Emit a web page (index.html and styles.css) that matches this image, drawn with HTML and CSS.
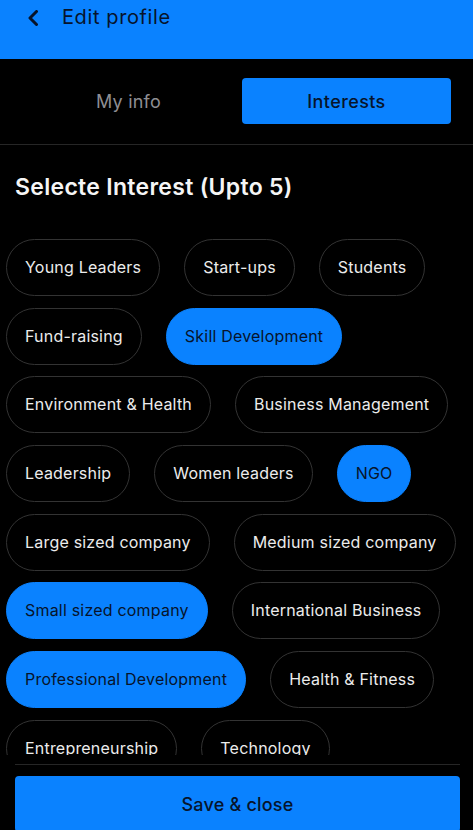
FILE: index.html
```html
<!DOCTYPE html>
<html lang="en">
<head>
    <meta charset="UTF-8">
    <meta name="viewport" content="width=device-width, initial-scale=1.0">
    <title>Edit profile</title>
    <link rel="stylesheet" href="styles.css">
</head>
<body>
    <div class="app">
        <header class="topbar">
            <button class="back-btn" aria-label="Back">
                <svg width="12" height="16" viewBox="0 0 12 16">
                    <polyline points="9.5,1.5 3,8 9.5,14.5" fill="none" stroke="#07142b" stroke-width="3" stroke-linecap="round" stroke-linejoin="round"/>
                </svg>
            </button>
            <h1>Edit profile</h1>
        </header>

        <div class="tabs">
            <button class="tab">My info</button>
            <button class="tab active">Interests</button>
        </div>

        <h2 class="section-title">Selecte Interest (Upto 5)</h2>

        <div class="chip-list">
            <span class="chip">Young Leaders</span>
            <span class="chip">Start-ups</span>
            <span class="chip">Students</span>
            <span class="chip">Fund-raising</span>
            <span class="chip selected">Skill Development</span>
            <span class="chip">Environment &amp; Health</span>
            <span class="chip">Business Management</span>
            <span class="chip">Leadership</span>
            <span class="chip">Women leaders</span>
            <span class="chip selected">NGO</span>
            <span class="chip">Large sized company</span>
            <span class="chip">Medium sized company</span>
            <span class="chip selected">Small sized company</span>
            <span class="chip">International Business</span>
            <span class="chip selected">Professional Development</span>
            <span class="chip">Health &amp; Fitness</span>
            <span class="chip">Entrepreneurship</span>
            <span class="chip">Technology</span>
        </div>

        <div class="footer">
            <button class="save-btn">Save &amp; close</button>
        </div>
    </div>
</body>
</html>
```

FILE: styles.css
```css
body {
    margin: 0;
    background-color: #000;
    font-family: Inter, "Noto Sans", sans-serif;
    color: #f2f2f2;
    overflow: hidden;
}

/* a little taller than the window: the save button runs past the bottom edge */
.app {
    height: 832px;
    display: flex;
    flex-direction: column;
}

.topbar {
    height: 59px;
    box-sizing: border-box;
    background-color: #0a82ff;
    display: flex;
    align-items: flex-start;
    padding: 5px 0 0 27px;
    flex-shrink: 0;
}

.back-btn {
    background: none;
    border: none;
    padding: 0;
    margin-top: 5px;
    width: 12px;
    height: 16px;
    display: flex;
}

.topbar h1 {
    margin: 0 0 0 23px;
    font-size: 20px;
    line-height: 24px;
    font-weight: 400;
    letter-spacing: 0.6px;
    color: #07142b;
}

.tabs {
    display: flex;
    gap: 9px;
    padding: 19px 22px 20px 24px;
    border-bottom: 1px solid #262626;
    flex-shrink: 0;
}

.tab {
    flex: 1;
    height: 46px;
    background: none;
    border: none;
    border-radius: 4px;
    font-family: inherit;
    font-size: 18px;
    letter-spacing: 0.2px;
    color: #8e8e93;
}

.tab.active {
    background-color: #0a82ff;
    color: #07142b;
    font-weight: 500;
    letter-spacing: 0.4px;
}

.section-title {
    margin: 0;
    padding: 28px 15px 0;
    font-size: 23px;
    line-height: 28px;
    font-weight: 600;
    letter-spacing: 0.3px;
    color: #f5f5f5;
    flex-shrink: 0;
}

.chip-list {
    flex: 1;
    min-height: 0;
    overflow: hidden;
    display: flex;
    flex-wrap: wrap;
    align-content: flex-start;
    gap: 11.7px 24px;
    padding: 38px 6px 0;
    margin-bottom: 9px;
}

.chip {
    padding: 18px 18px;
    line-height: 19px;
    font-size: 16px;
    letter-spacing: 0.2px;
    border: 1px solid #333;
    border-radius: 999px;
    color: #ececec;
    white-space: nowrap;
}

.chip.selected {
    background-color: #0a82ff;
    border-color: #0a82ff;
    color: #07142b;
}

.footer {
    margin: 0 13px 0 15px;
    border-top: 1px solid #262626;
    padding-top: 11px;
    flex-shrink: 0;
}

.save-btn {
    width: 100%;
    height: 56px;
    background-color: #0a82ff;
    border: none;
    border-radius: 4px;
    font-family: inherit;
    font-size: 18px;
    font-weight: 500;
    letter-spacing: 0.2px;
    color: #07142b;
}
```
